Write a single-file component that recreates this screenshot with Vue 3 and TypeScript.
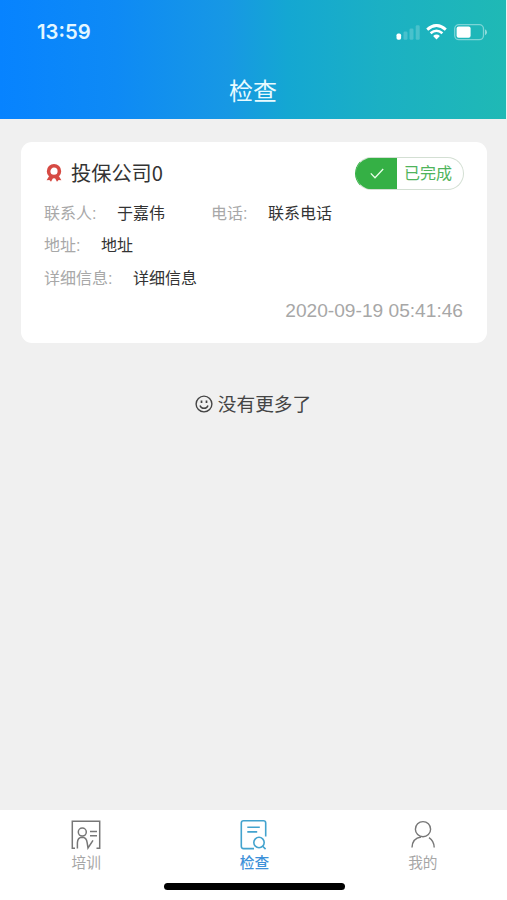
<script setup lang="ts">
import { ref } from 'vue'

interface Field {
  label: string
  value: string
}

interface Tab {
  key: 'training' | 'inspect' | 'mine'
  label: string
}

const company = '投保公司0'
const rows: Field[][] = [
  [
    { label: '联系人:', value: '于嘉伟' },
    { label: '电话:', value: '联系电话' },
  ],
  [{ label: '地址:', value: '地址' }],
  [{ label: '详细信息:', value: '详细信息' }],
]

const tabs: Tab[] = [
  { key: 'training', label: '培训' },
  { key: 'inspect', label: '检查' },
  { key: 'mine', label: '我的' },
]
const active = ref<Tab['key']>('inspect')
</script>

<template>
  <div class="screen">
    <header class="header">
      <div class="status">
        <span class="clock">13:59</span>
        <div class="indicators">
          <svg class="signal" width="25" height="16" viewBox="0 0 25 16" fill="#fff">
            <rect x="1.5" y="9.5" width="4.6" height="6.3" rx="1.7" />
            <rect x="8.5" y="7.5" width="4" height="8.3" rx="1.3" opacity="0.2" />
            <rect x="14.5" y="4.5" width="4" height="11.3" rx="1.3" opacity="0.2" />
            <rect x="20.7" y="1.2" width="4" height="14.6" rx="1.3" opacity="0.2" />
          </svg>
          <svg class="wifi" width="21" height="16" viewBox="0 0 21 16" fill="none" stroke="#fff">
            <path d="M1.2 5.6 Q10.5 -2.6 19.8 5.6" stroke-width="2.9" />
            <path d="M4.6 9.3 Q10.5 4.2 16.4 9.3" stroke-width="2.6" />
            <path d="M7.1 11.9 Q10.5 9.2 13.9 11.9 L10.5 15.6 Z" fill="#fff" stroke="none" />
          </svg>
          <svg class="battery" width="33" height="17" viewBox="0 0 33 17">
            <rect x="0.7" y="0.7" width="28.8" height="15" rx="4.2" fill="none" stroke="#fff" stroke-opacity="0.42" stroke-width="1.3" />
            <rect x="2.6" y="2.6" width="14" height="11.2" rx="2" fill="#fff" />
            <path d="M31 5.2 Q33 6.2 33 8.2 Q33 10.2 31 11.2 Z" fill="#fff" fill-opacity="0.5" />
          </svg>
        </div>
      </div>
      <h1 class="title">检查</h1>
    </header>

    <main class="content">
      <article class="card">
        <div class="card-head">
          <svg class="medal" width="16" height="18" viewBox="0 0 16 18">
            <circle cx="8" cy="7.2" r="5.4" fill="none" stroke="#d64a43" stroke-width="3.6" />
            <path d="M3.2 12 L0.6 16.2 L3.4 16 L5 17.8 L7.4 13.6 Z M12.8 12 L15.4 16.2 L12.6 16 L11 17.8 L8.6 13.6 Z" fill="#d64a43" />
          </svg>
          <h2 class="company">{{ company }}</h2>
          <div class="badge">
            <span class="badge-mark">
              <svg width="14" height="11" viewBox="0 0 14 11" fill="none" stroke="#e9ffe9" stroke-width="1.3">
                <path d="M0.8 5.4 L5 9.7 L13.2 1" />
              </svg>
            </span>
            <span class="badge-text">已完成</span>
          </div>
        </div>
        <div v-for="(row, i) in rows" :key="i" class="row">
          <div v-for="field in row" :key="field.label" class="field">
            <span class="label">{{ field.label }}</span>
            <span class="value">{{ field.value }}</span>
          </div>
        </div>
        <time class="date">2020-09-19 05:41:46</time>
      </article>

      <p class="end">
        <svg width="18" height="18" viewBox="0 0 18 18" fill="none" stroke="#444" stroke-width="1.4">
          <circle cx="9" cy="9" r="7.9" />
          <path d="M5 10.4 Q6 13.3 9 13.3 Q12 13.3 13 10.4" />
          <path d="M6.5 5.4 V8 M11.5 5.4 V8" stroke-width="1.7" />
        </svg>
        <span class="end-text">没有更多了</span>
      </p>
    </main>

    <nav class="tabbar">
      <div class="tabs">
        <button
          v-for="tab in tabs"
          :key="tab.key"
          type="button"
          class="tab"
          :class="{ active: tab.key === active }"
          @click="active = tab.key"
        >
          <svg v-if="tab.key === 'training'" width="30" height="30" viewBox="0 0 30 30" fill="none" stroke="currentColor" stroke-width="1.5">
            <path d="M4 28.2 H1.3 V1.2 H28.7 V28.2 H25.5" />
            <circle cx="11.3" cy="12.1" r="4" />
            <path d="M6.4 28.4 V22.8 Q6.6 17.4 11.2 17.3 Q15.5 17.4 16.2 22.8 L17 28 L22 20.4" />
            <path d="M19 11.6 H26 M19 15.8 H26" />
          </svg>
          <svg v-else-if="tab.key === 'inspect'" width="30" height="30" viewBox="0 0 30 30" fill="none" stroke="currentColor" stroke-width="1.6">
            <path d="M15 28.6 H4.6 Q2.3 28.6 2.3 26.3 V2.9 Q2.3 0.8 4.6 0.8 H24.4 Q26.7 0.8 26.7 2.9 V16.5" />
            <path d="M8.3 7.3 H20.8 M8.3 11.9 H18.2" />
            <circle cx="20" cy="22.5" r="5.2" />
            <path d="M23.7 26.2 L26.6 29.1" />
          </svg>
          <svg v-else width="30" height="30" viewBox="0 0 30 30" fill="none" stroke="currentColor" stroke-width="1.4">
            <circle cx="15" cy="9.2" r="7.6" />
            <path d="M4 27.5 Q4.3 18.3 13 17 M21 17.7 Q26 21 26.2 27.5" />
          </svg>
          <span class="tab-label">{{ tab.label }}</span>
        </button>
      </div>
      <div class="home-bar"></div>
    </nav>
  </div>
</template>

<style>
body {
  margin: 0;
  background: #f0f0f0;
}
</style>

<style scoped>
.screen {
  display: flex;
  flex-direction: column;
  height: 900px;
  background: #f0f0f0;
  font-family: 'Liberation Sans', 'Noto Sans CJK SC', sans-serif;
  color: #333;
}

.header {
  height: 119px;
  margin-right: 1px;
  background: linear-gradient(90deg, #0783ff 0%, #0e8af5 23%, #1798e4 45%, #14a7d2 57%, #1bb0c4 75%, #1fb9b5 100%);
  color: #fff;
}

.status {
  display: flex;
  align-items: center;
  justify-content: space-between;
  height: 64px;
  padding: 0 19px 0 37px;
}

.clock {
  font: 600 20.3px/24px Inter, sans-serif;
  color: #e4f7ff;
}

.indicators {
  display: flex;
  align-items: center;
}

.wifi {
  margin-left: 6px;
}

.battery {
  margin-left: 7px;
}

.title {
  margin: 11px 0 0;
  font-size: 24px;
  font-weight: 400;
  line-height: 34px;
  text-align: center;
  color: #e8fbff;
}

.content {
  flex: 1;
  padding: 23px 20px 0 21px;
}

.card {
  box-sizing: border-box;
  height: 201px;
  padding: 14px 23px 0;
  border-radius: 11px;
  background: #fff;
}

.card-head {
  display: flex;
  align-items: center;
  height: 34px;
  margin-bottom: 8px;
}

.medal {
  margin: 0 9px 0 2px;
}

.company {
  margin: 0;
  font-size: 20.2px;
  font-weight: 400;
  line-height: 30px;
  font-family: 'Noto Sans CJK SC', sans-serif;
}

.badge {
  box-sizing: border-box;
  display: flex;
  width: 109px;
  height: 33px;
  margin-left: auto;
  overflow: hidden;
  border: 1px solid #d3dfd3;
  border-left-color: #35b045;
  border-radius: 17px;
  background: #fff;
}

.badge-mark {
  display: flex;
  align-items: center;
  justify-content: center;
  width: 40px;
  padding-left: 2px;
  box-sizing: border-box;
  background: #35b045;
  box-shadow: 0 0 0 1px #35b045;
}

.badge-text {
  flex: 1;
  padding-right: 3px;
  color: #4fb45c;
  font-size: 16px;
  line-height: 32px;
  text-align: center;
}

.row {
  display: flex;
  gap: 46px;
  height: 32.4px;
  font-size: 16px;
  line-height: 32.4px;
}

.field {
  display: flex;
  gap: 20.5px;
}

.label {
  color: #a8a8a8;
}

.date {
  display: block;
  margin-right: 1px;
  color: #a7a7a7;
  font-size: 19.15px;
  line-height: 32px;
  text-align: right;
}

.end {
  display: flex;
  align-items: center;
  justify-content: center;
  gap: 5px;
  margin: 44px 2px 0 0;
  font-size: 18.7px;
  line-height: 30px;
  color: #444;
}

.end-text {
  padding-top: 3px;
}

.tabbar {
  height: 90px;
  padding-left: 2px;
  background: #fff;
}

.tabs {
  display: flex;
  height: 73px;
}

.tab {
  flex: 1;
  display: flex;
  flex-direction: column;
  align-items: center;
  padding: 10px 0 0;
  border: 0;
  background: none;
  color: #777;
  font: inherit;
}

.tab-label {
  margin-top: 2px;
  font-size: 14.7px;
  line-height: 22px;
  color: #a6a6a6;
}

.tab.active {
  color: #43a3ce;
}

.tab.active .tab-label {
  color: #3d91d9;
  font-weight: 500;
}

.home-bar {
  width: 181px;
  height: 7px;
  margin: 0 auto;
  border-radius: 4px;
  background: #000;
}
</style>
